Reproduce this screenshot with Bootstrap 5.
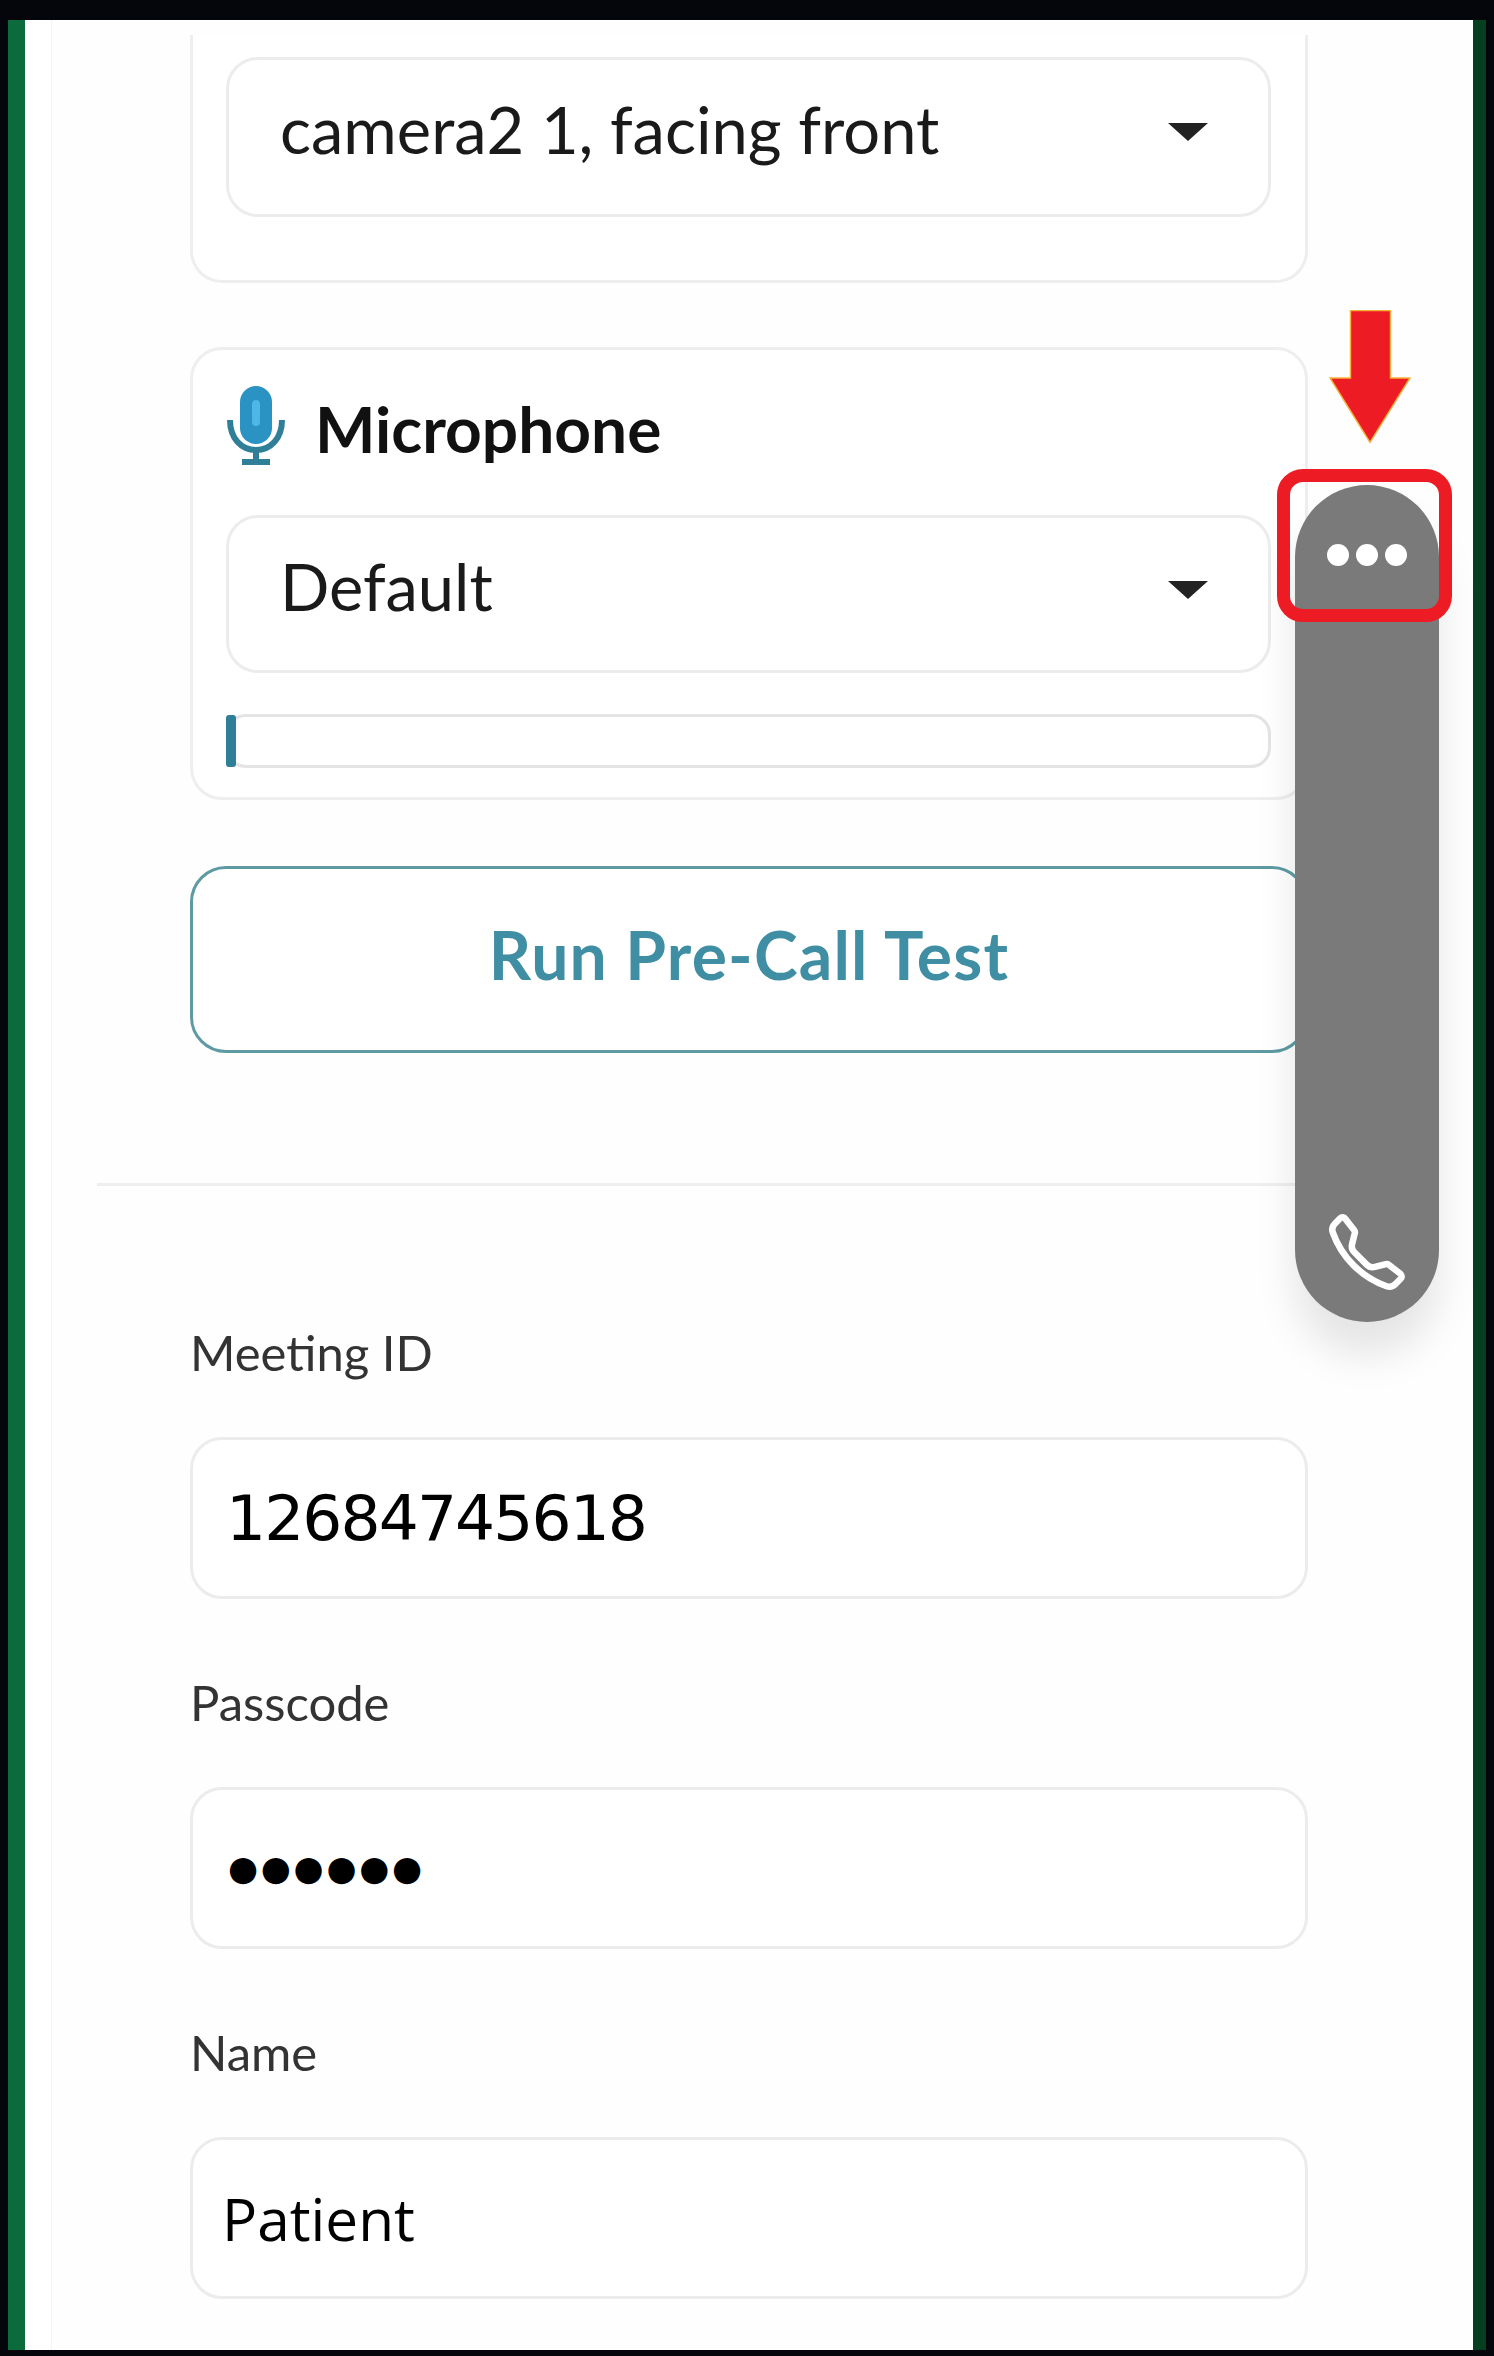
<!DOCTYPE html>
<html lang="en">
<head>
    <meta charset="UTF-8">
    <meta name="viewport" content="width=device-width, initial-scale=1.0">
    <title>Pre-call settings</title>
    <link href="https://cdn.jsdelivr.net/npm/bootstrap@5.3.0/dist/css/bootstrap.min.css" rel="stylesheet">
    <style>
        html, body { height: 2356px; overflow: hidden; }
        body { background: #04060c; padding: 20px 8px 6px; font-family: "Noto Sans", sans-serif; color: #111; }
        .phone-frame { position: relative; height: 2330px; overflow: hidden; background: #fff; border-left: 17px solid #0b6b3c; border-right: 13px solid #063f1f; }
        .phone-screen { height: 100%; margin-left: 26px; padding: 15px 165px 0 138px; background: #fefefe; border-left: 1px solid #f5f5f5; }
        .device-box { border: 3px solid #eee; border-radius: 32px; background: #fff; padding: 0 34px 0 33px; }
        .device-box.cam { height: 248px; padding-top: 22px; border-top: 0; border-top-left-radius: 0; border-top-right-radius: 0; margin-bottom: 64px; }
        .device-box.mic { height: 453px; }
        .mic-head { height: 165px; padding-bottom: 8px; gap: 29px; font: 700 64px/1 "Lato", sans-serif; color: #111; }
        .mic-icon { margin-top: -6px; }
        .form-select.pick, .form-control.entry { display: flex; align-items: center; border: 3px solid #ececec; border-radius: 32px; background-color: #fff; box-shadow: none; }
        .form-select.pick { height: 158px; padding: 0 60px 16px 51px; font: 400 65px/1 "Lato", sans-serif; color: #1a1a1a; background-image: url("data:image/svg+xml,%3Csvg xmlns='http://www.w3.org/2000/svg' viewBox='0 0 40 20'%3E%3Cpath d='M0 2h40L20 20z' fill='%23222'/%3E%3C/svg%3E"); background-size: 40px 20px; background-position: right 60px top 61px; }
        .device-box.cam .form-select.pick { height: 160px; }
        .level-track { height: 54px; margin-top: 41px; border: 3px solid #e4e4e4; border-radius: 20px; background: #fff; overflow: visible; }
        .level-track .progress-bar { background: #2f7f99; border-radius: 3px; margin-left: -3px; margin-top: -2px; height: 52px; }
        .run-btn { display: block; width: 100%; height: 187px; margin-top: 66px; padding-bottom: 16px; background: #fff; border: 3px solid #5d9aa3; border-radius: 36px; font: 700 66px/1 "Lato", sans-serif; letter-spacing: 1.2px; color: #3f8ea3; }
        .run-btn:hover { background: #fff; color: #3f8ea3; border-color: #5d9aa3; }
        .split-line { height: 3px; margin: 130px -13px 136px -93px; background: #eee; opacity: 1; border: 0; }
        .field-name { display: block; height: 60px; margin-bottom: 55px; font: 400 49px/60px "Lato", sans-serif; color: #333; }
        .form-control.entry { height: 162px; margin-bottom: 73px; padding: 0 33px; color: #000; }
        .entry.num { font: 400 63px/1 "DejaVu Sans", sans-serif; letter-spacing: -1.9px; }
        .entry.dots { font: 400 34.5px/1 "DejaVu Sans", sans-serif; letter-spacing: 2.7px; padding-left: 35px; }
        .entry.plain { font: 400 58.5px/1 "Open Sans", sans-serif; padding-left: 29px; }
        .call-pill { position: absolute; left: 1270px; top: 465px; width: 144px; height: 837px; border-radius: 72px; background: #7a7a7a; box-shadow: 0 34px 40px rgba(0,0,0,.1); padding: 59px 0 30px; }
        .pill-dot { width: 22px; height: 22px; border-radius: 50%; background: #fff; }
        .pill-dots { gap: 7px; }
        .red-mark { position: absolute; left: 1252px; top: 449px; width: 175px; height: 153px; border: 13px solid #ed1c24; border-radius: 26px; }
        .red-arrow { position: absolute; left: 1304px; top: 288px; }
    </style>
</head>
<body>
    <div class="phone-frame">
        <div class="phone-screen">
            <div class="device-box cam">
                <div class="form-select pick">camera2 1, facing front</div>
            </div>

            <div class="device-box mic">
                <div class="mic-head d-flex align-items-center">
                    <svg class="mic-icon" width="60" height="80" viewBox="0 0 60 80">
                        <rect x="14" y="0" width="32" height="58" rx="16" fill="#2b93c4"/>
                        <rect x="26" y="14" width="8" height="26" rx="4" fill="#4fb6e6"/>
                        <path d="M4 34c0 18 11 30 26 30s26-12 26-30" fill="none" stroke="#2f7f99" stroke-width="6"/>
                        <path d="M30 64v10M16 76h28" fill="none" stroke="#2f7f99" stroke-width="6"/>
                    </svg>
                    <span>Microphone</span>
                </div>
                <div class="form-select pick">Default</div>
                <div class="progress level-track">
                    <div class="progress-bar" style="width: 1%"></div>
                </div>
            </div>

            <button type="button" class="btn run-btn">Run Pre-Call Test</button>

            <hr class="split-line">

            <label class="field-name">Meeting ID</label>
            <div class="form-control entry num">12684745618</div>

            <label class="field-name">Passcode</label>
            <div class="form-control entry dots">●●●●●●</div>

            <label class="field-name">Name</label>
            <div class="form-control entry plain">Patient</div>
        </div>

        <div class="call-pill d-flex flex-column align-items-center justify-content-between">
            <div class="pill-dots d-flex">
                <span class="pill-dot"></span>
                <span class="pill-dot"></span>
                <span class="pill-dot"></span>
            </div>
            <svg width="80" height="80" viewBox="0 0 16 16">
                <path d="M3.654 1.328a.678.678 0 0 0-1.015-.063L1.605 2.3c-.483.484-.661 1.169-.45 1.77a17.568 17.568 0 0 0 4.168 6.608 17.569 17.569 0 0 0 6.608 4.168c.601.211 1.286.033 1.77-.45l1.034-1.034a.678.678 0 0 0-.063-1.015l-2.307-1.794a.678.678 0 0 0-.58-.122l-2.19.547a1.745 1.745 0 0 1-1.657-.459L5.482 8.062a1.745 1.745 0 0 1-.46-1.657l.548-2.19a.678.678 0 0 0-.122-.58L3.654 1.328z" fill="none" stroke="#fff" stroke-width="1.3"/>
            </svg>
        </div>

        <div class="red-mark"></div>
        <svg class="red-arrow" width="82" height="138" viewBox="0 0 84 138">
            <path d="M22 1h41v69h20L42 136 1 70h21z" fill="#ed1c24" stroke="#f7b23b" stroke-width="1.5"/>
        </svg>
    </div>

    <script src="https://cdn.jsdelivr.net/npm/bootstrap@5.3.0/dist/js/bootstrap.bundle.min.js"></script>
</body>
</html>
